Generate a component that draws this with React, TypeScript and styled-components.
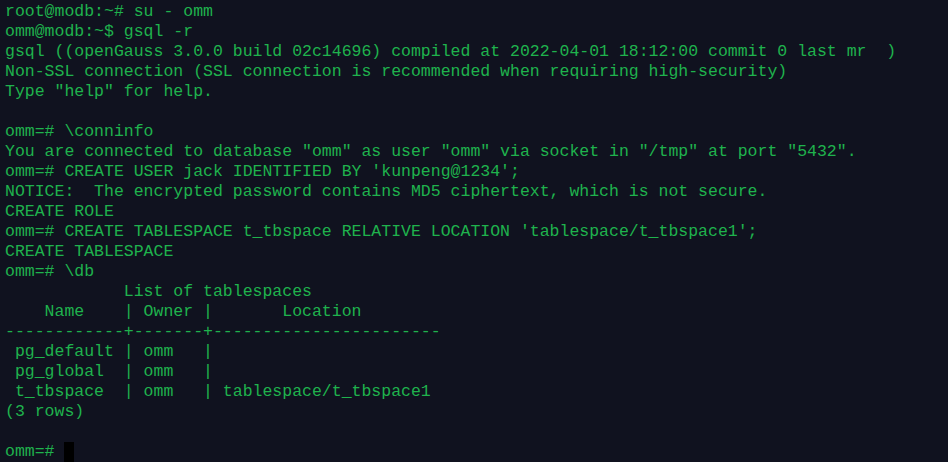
import React from "react";
import styled, { createGlobalStyle } from "styled-components";

const Global = createGlobalStyle`
  html, body { margin: 0; padding: 0; background: #10121f; }
  #root { width: 948px; height: 462px; overflow: hidden; }
`;

const Terminal = styled.div`
  width: 948px;
  height: 462px;
  box-sizing: border-box;
  padding: 2px 0 0 5px;
  background: #10121f;
  color: #1fb24d;
  font-family: "Liberation Mono", "Courier New", monospace;
  font-size: 16.5px;
  line-height: 20px;
  display: flex;
  flex-direction: column;
`;

const Line = styled.div`
  white-space: pre;
  height: 20px;
  flex-shrink: 0;
`;

const Cursor = styled.span`
  display: inline-block;
  width: 10px;
  height: 20px;
  background: #000;
  vertical-align: top;
`;

const lines = [
  "root@modb:~# su - omm",
  "omm@modb:~$ gsql -r",
  "gsql ((openGauss 3.0.0 build 02c14696) compiled at 2022-04-01 18:12:00 commit 0 last mr  )",
  "Non-SSL connection (SSL connection is recommended when requiring high-security)",
  'Type "help" for help.',
  "",
  "omm=# \\conninfo",
  'You are connected to database "omm" as user "omm" via socket in "/tmp" at port "5432".',
  "omm=# CREATE USER jack IDENTIFIED BY 'kunpeng@1234';",
  "NOTICE:  The encrypted password contains MD5 ciphertext, which is not secure.",
  "CREATE ROLE",
  "omm=# CREATE TABLESPACE t_tbspace RELATIVE LOCATION 'tablespace/t_tbspace1';",
  "CREATE TABLESPACE",
  "omm=# \\db",
  "            List of tablespaces",
  "    Name    | Owner |       Location",
  "------------+-------+-----------------------",
  " pg_default | omm   |",
  " pg_global  | omm   |",
  " t_tbspace  | omm   | tablespace/t_tbspace1",
  "(3 rows)",
  "",
];

export default function App() {
  return (
    <>
      <Global />
      <Terminal>
        {lines.map((l, i) => (
          <Line key={i}>{l}</Line>
        ))}
        <Line>
          {"omm=# "}
          <Cursor />
        </Line>
      </Terminal>
    </>
  );
}
